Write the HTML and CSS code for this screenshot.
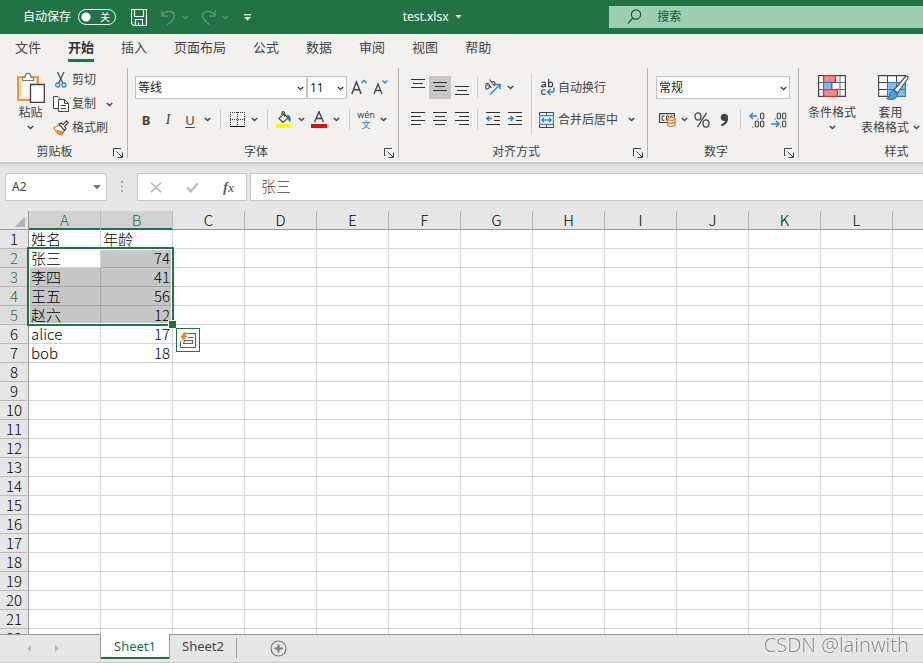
FILE: index.html
```html
<!DOCTYPE html>
<html lang="zh-CN">
<head>
<meta charset="utf-8">
<title>test.xlsx</title>
<link rel="stylesheet" href="styles.css">
</head>
<body>
<svg class="symbols" aria-hidden="true">
  <symbol id="chevron" viewBox="0 0 7 5"><path d="M.8 .9 3.5 3.5 6.2 .9" fill="none" stroke="currentColor" stroke-width="1.4"/></symbol>
  <symbol id="launcher" viewBox="0 0 10 10"><path d="M.5 8V.5H8M3.5 3.5 9 9M9.500 4.500V9.500H4.500" fill="none" stroke="currentColor"/></symbol>
</svg>

<header class="titlebar">
  <div class="quick">
    <label for="autosave">自动保存</label>
    <span class="switch"><input type="checkbox" role="switch" id="autosave"><span class="switch-text" aria-hidden="true">关</span></span>
    <button class="quick-btn save" aria-label="保存"><svg width="16" height="17" viewBox="0 0 16 17" fill="none" stroke="currentColor"><path d="M.5 .5H15.500V16.500H2.500L.5 14.500ZM3.500 .5V7.500H12.500V.5M4.500 16.500V10.500H11.500V16.500M7.500 16V13.500" stroke-width="1.2"/></svg></button>
    <button class="quick-btn faded" aria-label="撤消"><svg width="15" height="17" viewBox="0 0 15 17" fill="none" stroke="currentColor" stroke-width="1.4"><path d="M1 1V7H7M1 7C4 1 13 1 13.500 7C13.500 11 9 13 6 16"/></svg></button>
    <button class="quick-btn faded" aria-label="撤消选项"><svg width="7" height="5"><use href="#chevron"/></svg></button>
    <button class="quick-btn faded" aria-label="恢复"><svg width="15" height="17" viewBox="0 0 15 17" fill="none" stroke="currentColor" stroke-width="1.4"><path d="M14 1V7H8M14 7C11 1 2 1 1.500 7C1.500 11 6 13 9 16"/></svg></button>
    <button class="quick-btn faded" aria-label="恢复选项"><svg width="7" height="5"><use href="#chevron"/></svg></button>
    <button class="quick-btn custom" aria-label="自定义快速访问工具栏"><svg width="9" height="7" viewBox="0 0 9 7"><path d="M1 .7H8" stroke="currentColor" stroke-width="1.300"/><path d="M1 3 4.500 6.500 8 3Z" fill="currentColor"/></svg></button>
  </div>
  <button class="doc-title">test.xlsx <svg width="7" height="4" viewBox="0 0 7 4"><path d="M.5 0H6.500L3.500 3.500Z" fill="currentColor"/></svg></button>
  <div class="search">
    <svg width="15" height="16" viewBox="0 0 15 16" fill="none" stroke="currentColor" stroke-width="1.2"><circle cx="9" cy="5.500" r="4.600"/><path d="M5.800 9 .8 14.700"/></svg>
    <input type="search" aria-label="搜索" placeholder="搜索">
  </div>
</header>

<nav class="tabs" aria-label="功能区选项卡">
  <button>文件</button><button class="active">开始</button><button>插入</button><button>页面布局</button><button>公式</button><button>数据</button><button>审阅</button><button>视图</button><button>帮助</button>
</nav>

<section class="ribbon" aria-label="开始">
  <section class="group clipboard">
    <div class="group-body">
      <button class="big paste">
        <svg width="28" height="31" viewBox="0 0 28 31"><path d="M1 5H21V28H1Z" fill="#fcdf9c" stroke="#e8832a" stroke-width="1.6"/><path d="M4 7H19V26H4Z" fill="#faf8f5"/><path d="M5.500 8.500V5.500H8C8 0 14 0 14 5.500H16.500V8.500Z" fill="#fff" stroke="#777" stroke-width="1.2"/><path d="M13.500 12.500H27.300V30.300H13.500Z" fill="#fff" stroke="#3d3d3d" stroke-width="1.300"/></svg>
        <span>粘贴</span><svg class="drop" width="7" height="5"><use href="#chevron"/></svg>
      </button>
      <div class="small-list">
        <button><svg width="16" height="16" viewBox="0 0 16 16" fill="none"><path d="M4.500 0 9.800 11M11 0 5.700 11" stroke="#484848" stroke-width="1.200"/><circle cx="4.700" cy="13" r="2" stroke="#2b88d0" stroke-width="1.300"/><circle cx="11" cy="13" r="2" stroke="#2b88d0" stroke-width="1.300"/></svg><span>剪切</span></button>
        <button><svg width="16" height="16" viewBox="0 0 16 16" fill="#fff" stroke="#444"><path d="M5.500 12.500H.5V.5H5L7.500 3"/><path d="M5.500 3.500H11.500L15.500 7.500V15.500H5.500ZM11.500 3.500V7.500H15.500M7.500 9.500H13M7.500 12.500H13"/></svg><span>复制</span><svg class="drop" width="7" height="5"><use href="#chevron"/></svg></button>
        <button><svg width="16" height="16" viewBox="0 0 16 16"><path d="M7 4.500 1 7.500C2 11 5 14.500 8.500 15L11.500 10Z" fill="#fff" stroke="#e8751a" stroke-width="1.200"/><path d="M3 9.500 10 11.500 8.500 14.800C6 14 4 12 3 9.500Z" fill="#ee8424"/><path d="M6 4 8 3 10 4.500 13.500 .8 15.200 2.500 11.500 6.500 13 8.500 11.500 10.500Z" fill="#fff" stroke="#444" stroke-width="1.200"/></svg><span>格式刷</span></button>
      </div>
    </div>
    <footer><span>剪贴板</span><button class="launch" aria-label="剪贴板设置"><svg width="10" height="10"><use href="#launcher"/></svg></button></footer>
  </section>

  <section class="group font">
    <div class="group-body rows">
      <div class="row">
        <div class="combo face"><select aria-label="字体"><option>等线</option></select><svg width="7" height="5"><use href="#chevron"/></svg></div>
        <div class="combo size"><select aria-label="字号"><option>11</option></select><svg width="7" height="5"><use href="#chevron"/></svg></div>
        <button class="tool grow" aria-label="增大字号"><svg width="16" height="17" viewBox="0 0 16 17" fill="none"><path d="M.8 15 5.500 3 10.200 15M2.600 10.800H8.500" stroke="#444" stroke-width="1.400"/><path d="M10.500 4 13 1.500 15.500 4" stroke="#2b88d0" stroke-width="1.400"/></svg></button>
        <button class="tool" aria-label="减小字号"><svg width="16" height="17" viewBox="0 0 16 17" fill="none"><path d="M1 15 5 5 9 15M2.600 11.500H7.500" stroke="#444" stroke-width="1.300"/><path d="M9.500 1.500 12 4 14.500 1.500" stroke="#2b88d0" stroke-width="1.400"/></svg></button>
      </div>
      <div class="row">
        <button class="tool bold" aria-label="加粗">B</button>
        <button class="tool italic" aria-label="倾斜">I</button>
        <button class="tool underline" aria-label="下划线">U</button>
        <button class="arrow" aria-label="下划线选项"><svg width="7" height="5"><use href="#chevron"/></svg></button>
        <span class="sep"></span>
        <button class="tool" aria-label="边框"><svg width="15" height="15" viewBox="0 0 15 15" fill="none" stroke="#333" shape-rendering="crispEdges"><path d="M0 .5H15M0 7.500H15M.5 0V14M7.500 0V14M14.500 0V14" stroke-dasharray="1 1"/><path d="M0 14.500H15" stroke="#000"/></svg></button>
        <button class="arrow" aria-label="边框选项"><svg width="7" height="5"><use href="#chevron"/></svg></button>
        <span class="sep"></span>
        <button class="tool" aria-label="填充颜色"><svg width="16" height="17" viewBox="0 0 16 17"><path d="M3 7.500 8 2.500 12 7 7 11.500ZM6 5V1.800C6 .2 8.500 .2 8.500 1.800V6" fill="#fff" stroke="#444" stroke-width="1.200"/><path d="M11 4C14 4 15 6 14.500 10.500H13L11.500 7Z" fill="#2473b8"/><path d="M0 13H16V17H0Z" fill="#ff0"/></svg></button>
        <button class="arrow" aria-label="填充颜色选项"><svg width="7" height="5"><use href="#chevron"/></svg></button>
        <button class="tool" aria-label="字体颜色"><svg width="16" height="17" viewBox="0 0 16 17"><path d="M3.600 11 8 .8 12.400 11M5.200 7.500H10.800" fill="none" stroke="#444" stroke-width="1.400"/><path d="M0 13H16V17H0Z" fill="red"/></svg></button>
        <button class="arrow" aria-label="字体颜色选项"><svg width="7" height="5"><use href="#chevron"/></svg></button>
        <span class="sep"></span>
        <button class="tool phonetic" aria-label="拼音"><span>wén</span><b>文</b></button>
        <button class="arrow" aria-label="拼音选项"><svg width="7" height="5"><use href="#chevron"/></svg></button>
      </div>
    </div>
    <footer><span>字体</span><button class="launch" aria-label="字体设置"><svg width="10" height="10"><use href="#launcher"/></svg></button></footer>
  </section>

  <section class="group align">
    <div class="group-body">
      <div class="rows">
        <div class="row">
          <button class="tool" aria-label="顶端对齐"><svg width="14" height="17" viewBox="0 0 14 17" stroke="#333"><path d="M0 .5H14M2 4.500H12M0 8.500H14"/></svg></button>
          <button class="tool pressed" aria-label="垂直居中" aria-pressed="true"><svg width="14" height="17" viewBox="0 0 14 17" stroke="#333"><path d="M0 3.500H14M2 7.500H12M0 11.500H14"/></svg></button>
          <button class="tool" aria-label="底端对齐"><svg width="14" height="17" viewBox="0 0 14 17" stroke="#333"><path d="M0 7.500H14M2 11.500H12M0 15.500H14"/></svg></button>
          <span class="sep"></span>
          <button class="tool" aria-label="方向"><svg width="18" height="17" viewBox="0 0 18 17" fill="none"><path d="M1.500 5.500C2.500 3.500 4 4 5 5.500L7.500 9M4 5.500C1.500 6.500 1 8.500 2.200 9.500C4 11 6 8.500 5 6M5.500 .5 10.500 7M7.500 3.500C9 1 12.500 3.500 10.500 6.500" stroke="#444" stroke-width="1.100"/><path d="M6 15.500 16 5.500M11.500 5.500H16V10" stroke="#2b88d0" stroke-width="1.500"/></svg></button>
          <button class="arrow" aria-label="方向选项"><svg width="7" height="5"><use href="#chevron"/></svg></button>
        </div>
        <div class="row">
          <button class="tool" aria-label="左对齐"><svg width="14" height="15" viewBox="0 0 14 15" stroke="#333"><path d="M0 .5H14M0 4.500H10M0 8.500H14M0 12.500H10"/></svg></button>
          <button class="tool" aria-label="居中"><svg width="14" height="15" viewBox="0 0 14 15" stroke="#333"><path d="M0 .5H14M2 4.500H12M0 8.500H14M2 12.500H12"/></svg></button>
          <button class="tool" aria-label="右对齐"><svg width="14" height="15" viewBox="0 0 14 15" stroke="#333"><path d="M0 .5H14M4 4.500H14M0 8.500H14M4 12.500H14"/></svg></button>
          <span class="sep"></span>
          <button class="tool" aria-label="减少缩进量"><svg width="14" height="15" viewBox="0 0 14 15" fill="none" stroke="#333"><path d="M0 .5H14M8 4.500H14M8 8.500H14M0 12.500H14"/><path d="M6 6.500H.8M3.300 4 .8 6.500 3.300 9" stroke="#2b88d0" stroke-width="1.500"/></svg></button>
          <button class="tool" aria-label="增加缩进量"><svg width="14" height="15" viewBox="0 0 14 15" fill="none" stroke="#333"><path d="M0 .5H14M8 4.500H14M8 8.500H14M0 12.500H14"/><path d="M0 6.500H5.200M2.700 4 5.200 6.500 2.700 9" stroke="#2b88d0" stroke-width="1.500"/></svg></button>
        </div>
      </div>
      <span class="sep tall"></span>
      <div class="rows wide">
        <button class="row labelled"><svg width="16" height="17" viewBox="0 0 16 17" fill="none" stroke="#444" stroke-width="1.200"><path d="M2.500 3.500C5 2.500 6.500 3 6.500 4.500V8.200M6.500 5.500C4 5.500 2.600 6 2.600 7C2.600 8.500 5.500 8.200 6.500 6.500M9.600 0V8M9.600 5.500C9.600 2.300 13.600 2.300 13.600 5.500C13.600 8.500 9.600 8.500 9.600 5.500M6.500 11.200C4.500 10.200 2.600 11 2.600 13.200C2.600 15.300 4.500 16 6.500 15"/><path d="M15 8.500V11.500C15 12.500 14.500 13 13.500 13H8.500M11.500 10 8.500 13 11.500 16" stroke="#2b88d0" stroke-width="1.500"/></svg><span>自动换行</span></button>
        <button class="row labelled"><svg width="16" height="16" viewBox="0 0 16 16" fill="none"><path d="M.5 .5H14.500V15.500H.5ZM7.500 .5V4M7.500 12V15.500" stroke="#444"/><path d="M.6 3.600H14.400V12.400H.6Z" fill="#fff" stroke="#2b88d0" stroke-width="1.200"/><path d="M3 8H12M5 5.800 2.800 8 5 10.200M10 5.800 12.200 8 10 10.200" stroke="#2b88d0" stroke-width="1.300"/></svg><span>合并后居中</span><svg class="drop" width="7" height="5"><use href="#chevron"/></svg></button>
      </div>
    </div>
    <footer><span>对齐方式</span><button class="launch" aria-label="对齐设置"><svg width="10" height="10"><use href="#launcher"/></svg></button></footer>
  </section>

  <section class="group number">
    <div class="group-body rows">
      <div class="row">
        <div class="combo format"><select aria-label="数字格式"><option>常规</option></select><svg width="7" height="5"><use href="#chevron"/></svg></div>
      </div>
      <div class="row">
        <button class="tool" aria-label="会计数字格式"><svg width="17" height="14" viewBox="0 0 17 14" fill="none"><path d="M8 9.500H.6V.6H15.400V4" stroke="#444" stroke-width="1.200"/><path d="M5.500 3H3.200V7.300H5.500M7.400 7.500V3H9.500V7M11.500 4V3H13.500" stroke="#444"/><path d="M8.600 6V12C8.600 13.800 16 13.800 16 12V6" fill="#fff" stroke="#e8751a" stroke-width="1.200"/><ellipse cx="12.300" cy="5.800" rx="3.700" ry="1.500" fill="#fff" stroke="#e8751a" stroke-width="1.200"/><path d="M8.600 9C9 10.500 15.500 10.500 16 9" stroke="#e8751a" stroke-width="1.300"/></svg></button>
        <button class="arrow" aria-label="会计格式选项"><svg width="7" height="5"><use href="#chevron"/></svg></button>
        <button class="tool" aria-label="百分比样式"><svg width="16" height="16" viewBox="0 0 16 16" fill="none" stroke="#444" stroke-width="1.300"><ellipse cx="4" cy="4.500" rx="3" ry="3.600"/><ellipse cx="12" cy="11.500" rx="3" ry="3.600"/><path d="M12.500 .8 3.500 15.200"/></svg></button>
        <button class="tool" aria-label="千位分隔样式"><svg width="9" height="14" viewBox="0 0 9 14"><circle cx="4.300" cy="4.300" r="3.600" fill="#444"/><path d="M6.500 3C8 7 5.500 10.500 1.500 12.500" fill="none" stroke="#444" stroke-width="2.200"/></svg></button>
        <span class="sep"></span>
        <button class="tool" aria-label="增加小数位数"><svg width="16" height="16" viewBox="0 0 16 16" fill="none" stroke="#444" stroke-width="1.100"><path d="M9 6.500V7.500M4 14.500V15.500"/><rect x="11.500" y="1" width="3.300" height="6" rx="1.600"/><rect x="6.200" y="9" width="3.300" height="6" rx="1.600"/><rect x="11.500" y="9" width="3.300" height="6" rx="1.600"/><path d="M8 4H1M4 1 1 4 4 7" stroke="#2b88d0" stroke-width="1.500"/></svg></button>
        <button class="tool" aria-label="减少小数位数"><svg width="16" height="16" viewBox="0 0 16 16" fill="none" stroke="#444" stroke-width="1.100"><path d="M4 6.500V7.500M9.500 14.500V15.500"/><rect x="6.200" y="1" width="3.300" height="6" rx="1.600"/><rect x="11.500" y="1" width="3.300" height="6" rx="1.600"/><rect x="11.500" y="9" width="3.300" height="6" rx="1.600"/><path d="M0 12H8M5 9 8 12 5 15" stroke="#2b88d0" stroke-width="1.500"/></svg></button>
      </div>
    </div>
    <footer><span>数字</span><button class="launch" aria-label="数字设置"><svg width="10" height="10"><use href="#launcher"/></svg></button></footer>
  </section>

  <section class="group styles">
    <div class="group-body">
      <button class="big">
        <svg width="30" height="28" viewBox="0 0 30 28"><path d="M1.600 3.600H28.400V24.400H1.600Z" fill="#fff" stroke="#444" stroke-width="1.200"/><path d="M6.500 4V24M15 4V24M23 4V24M2 10.500H28M2 17.500H28" stroke="#666"/><path d="M6.600 3.600H18.400V10.400H6.600ZM6.600 17.600H20.400V24.400H6.600Z" fill="#ff8b90" stroke="#e02a20" stroke-width="1.300"/><path d="M6.600 10.500H14.400V17.500H6.600Z" fill="#7fbbea" stroke="#2b7cc4"/></svg>
        <span>条件格式</span><svg class="drop" width="7" height="5"><use href="#chevron"/></svg>
      </button>
      <button class="big">
        <svg width="32" height="28" viewBox="0 0 32 28"><path d="M1.600 3.600H28.400V24.400H1.600Z" fill="#fff" stroke="#444" stroke-width="1.200"/><path d="M10.500 10.500H28.400V24.400H10.500Z" fill="#83bdec"/><path d="M10.500 4V10M19.500 4V10M2 10.500H28M2 17.500H10.500" stroke="#444"/><path d="M10.500 10.500V24.400M19.500 10.500V24.400M10.500 17.500H28.400M10.500 10.500H28.400V24.400H12" stroke="#2b7cc4" fill="none"/><path d="M17 18 28.500 4.500C30 3 32 4.500 30.500 7L20.500 21Z" fill="#fff" stroke="#555" stroke-width="1.200"/><path d="M16.500 18.500C13 18.500 13 22 12.500 24C12 26 10 26 9.500 26.500C14 28.500 20 27.500 20.500 22.500Z" fill="#4b9de0" stroke="#1f6cb4"/></svg>
        <span>套用</span><span class="with-drop">表格格式<svg width="7" height="5"><use href="#chevron"/></svg></span>
      </button>
    </div>
    <footer><span>样式</span></footer>
  </section>
</section>

<section class="formula-bar" aria-label="编辑栏">
  <div class="name-box"><input aria-label="名称框" value="A2"><button aria-label="名称列表"><svg width="8" height="5" viewBox="0 0 8 5"><path d="M0 0H8L4 4.600Z" fill="#777"/></svg></button></div>
  <svg class="dots" width="2" height="12" viewBox="0 0 2 12" fill="#aaa"><path d="M0 0H2V2H0ZM0 4.500H2V6.500H0ZM0 9H2V11H0Z"/></svg>
  <div class="edit-actions">
    <button aria-label="取消"><svg width="12" height="11" viewBox="0 0 12 11"><path d="M1 .8 11 10.200M11 .8 1 10.200" stroke="#bdbdbd" stroke-width="1.800"/></svg></button>
    <button aria-label="输入"><svg width="13" height="11" viewBox="0 0 13 11"><path d="M1 5.500 4.700 9.200 12 1.200" fill="none" stroke="#bdbdbd" stroke-width="2.400"/></svg></button>
    <button class="fx" aria-label="插入函数">f<sub>x</sub></button>
  </div>
  <input class="formula" aria-label="公式" value="张三">
</section>

<main class="grid">
  <table>
    <thead><tr id="columns"></tr></thead>
    <tbody id="rows"></tbody>
  </table>
  <div class="selection"></div>
  <button class="quick-analysis" aria-label="快速分析"><svg width="18" height="17" viewBox="0 0 18 17" fill="none" stroke="#666"><path d="M8 1.500H16.500V15.500H1.500V9.500M9 5.500H14.500M5.500 8.500H13.500V11.500H4.500Z" stroke-width="1.200"/><path d="M4.500 .5H8.500L6.500 4H8.500L2 10 3.700 6H1.500Z" fill="#ee8424" stroke="none"/></svg></button>
</main>

<footer class="sheet-bar">
  <div class="sheet-nav">
    <button aria-label="上一个工作表"><svg width="4" height="7" viewBox="0 0 4 7"><path d="M4 0V7L0 3.500Z" fill="#bbb"/></svg></button>
    <button aria-label="下一个工作表"><svg width="4" height="7" viewBox="0 0 4 7"><path d="M0 0V7L4 3.500Z" fill="#bbb"/></svg></button>
  </div>
  <button class="sheet active">Sheet1</button>
  <button class="sheet">Sheet2</button>
  <span class="sheet-divider"></span>
  <button class="add" aria-label="新工作表"><svg width="17" height="17" viewBox="0 0 17 17" fill="none" stroke="#777"><circle cx="8.500" cy="8.500" r="7.500" stroke-width="1.200"/><path d="M8.500 4.500V12.500M4.500 8.500H12.500" stroke-width="2"/></svg></button>
</footer>
<div class="watermark">CSDN @lainwith</div>
<script src="script.js"></script>
</body>
</html>
```

FILE: styles.css
```css
* { box-sizing: border-box; }

:root {
  --green: #217346;
  --ui: "Noto Sans", "Noto Sans CJK SC", sans-serif;
  --cell: "Noto Sans CJK SC", sans-serif;
}

body {
  margin: 0;
  height: 100vh;
  display: flex;
  flex-direction: column;
  overflow: hidden;
  background: #e6e6e6;
  color: #444;
  font: 12px/16px var(--ui);
}

button, input, select { font: inherit; color: inherit; }
button { padding: 0; border: 0; background: none; }
svg { display: block; flex: none; }
.symbols { position: absolute; width: 0; height: 0; }

/* Title bar */
.titlebar {
  flex: none;
  display: flex;
  align-items: center;
  height: 34px;
  background: var(--green);
  color: #fff;
}
.quick { display: flex; align-items: center; width: 255px; padding-left: 23px; }
.switch { position: relative; display: flex; margin: 0 15px 0 7px; }
.switch input {
  appearance: none;
  width: 38px;
  height: 16px;
  margin: 0;
  border: 1px solid #fff;
  border-radius: 8px;
  background: radial-gradient(circle at 7px 7px, #fff 4px, transparent 5px);
}
.switch-text { position: absolute; right: 6px; top: 0; font-size: 10px; pointer-events: none; }
.quick-btn { display: flex; align-items: center; }
.quick-btn + .quick-btn { margin-left: 6px; }
.quick-btn.save + .quick-btn { margin-left: 14px; }
.faded { color: #589674; }
.faded:nth-of-type(4) { margin-left: 12px; }
.quick-btn.custom { margin-left: 14px; }
.doc-title { flex: 1; display: flex; align-items: center; justify-content: center; gap: 6px; }
.search {
  flex: 0 0 34%;
  display: flex;
  align-items: center;
  gap: 15px;
  height: 22px;
  padding-left: 18px;
  background: #9fcdb3;
  color: #0e5c2f;
}
.search svg { margin-right: 0; }
.search input { flex: 1; min-width: 0; padding: 0; border: 0; background: none; }
.search input::placeholder { color: inherit; opacity: 1; }

/* Ribbon tabs */
.tabs { flex: none; display: flex; gap: 27px; height: 30px; padding-left: 15px; background: #f3f1f0; }
.tabs button { height: 28px; border-bottom: 3px solid transparent; font-size: 13px; }
.tabs .active { border-color: var(--green); color: #333; font-weight: 700; }

/* Ribbon */
.ribbon {
  flex: none;
  display: flex;
  height: 100px;
  padding: 4px 0;
  overflow: hidden;
  background: #f3f1f0;
  border-bottom: 2px solid #cecccb;
}
.group { flex: none; display: flex; flex-direction: column; justify-content: space-between; border-right: 1px solid #b5b3b2; }
.group footer { display: flex; height: 14px; line-height: 16px; padding-right: 2px; }
.group footer span { flex: 1; text-align: center; }
.launch { display: flex; align-items: flex-end; width: 12px; }
.group-body { display: flex; }
.rows { display: flex; flex-direction: column; gap: 9px; padding-top: 8px; }
.row { display: flex; align-items: center; height: 23px; }
.clipboard { width: 128px; }
.clipboard footer span { padding-right: 4px; }
.font { width: 271px; }
.align { width: 249px; }
.number { width: 151px; }
.styles { width: 198px; }
.font .rows { padding-left: 7px; }
.number .rows, .align .rows { padding-left: 8px; }

.big { display: flex; flex-direction: column; align-items: center; line-height: 15px; padding-top: 4px; }
.big .drop { margin-top: 5px; }
.big > svg:first-child { margin-bottom: 2px; }
.paste { width: 53px; padding-left: 8px; }
.big span { white-space: nowrap; }
.small-list { display: flex; flex-direction: column; }
.small-list button { display: flex; align-items: center; gap: 3px; height: 24px; }
.small-list .drop { margin-left: 7px; }
.styles .group-body { padding-left: 9px; gap: 5px; }
.styles .big > svg:first-child { margin-bottom: 5px; }
.with-drop { display: flex; align-items: center; gap: 4px; }
.styles .big:last-child > svg { margin-left: 4px; }

.number .rows, .styles .group-body { flex: none; }

.combo { position: relative; height: 23px; }
.combo select {
  appearance: none;
  width: 100%;
  height: 100%;
  padding: 0 16px 0 2px;
  border: 1px solid #c6c4c2;
  border-radius: 0;
  background: #fff;
  color: #222;
}
.combo svg { position: absolute; right: 3px; top: 10px; pointer-events: none; }
.face { width: 172px; }
.size { width: 40px; }
.format { width: 134px; }
.grow { margin-left: 1px; }

.tool { flex: none; display: flex; align-items: center; justify-content: center; width: 22px; height: 23px; }
.arrow { flex: none; display: flex; justify-content: center; width: 13px; }
.sep { flex: none; width: 1px; height: 21px; margin: 0 5px; background: #d0cecc; }
.font .sep { margin-left: 6px; }
.align .sep { margin: 0 4px; }
.align .sep.tall { height: 60px; margin: 6px 0 0 5px; }
.pressed { background: #c8c6c4; }
.bold { font-weight: 700; font-size: 13px; }
.italic { font: italic 14px "Liberation Serif", serif; }
.underline { font-size: 13px; text-decoration: underline; text-underline-offset: 2px; }
.phonetic { flex-direction: column; font-size: 9px; line-height: 10px; }
.phonetic b { color: #2b88d0; font-weight: 400; }
.align .wide { padding-left: 7px; }
.labelled { gap: 3px; }
.labelled .drop { margin-left: 7px; }

/* Formula bar */
.formula-bar { flex: none; display: flex; align-items: center; padding: 9px 0 10px 5px; background: linear-gradient(#dcdcdc, #e6e6e6 6px); }
.name-box, .edit-actions, .formula { height: 28px; border: 1px solid #c6c6c6; background: #fff; }
.name-box { display: flex; align-items: center; width: 102px; padding: 0 5px 0 6px; }
.name-box input { flex: 1; min-width: 0; padding: 0; border: 0; }
.dots { margin: 0 14px; }
.edit-actions { display: flex; align-items: center; justify-content: space-around; width: 110px; margin-right: 3px; }
.fx { font: italic 700 15px/16px "Liberation Serif", serif; color: #666; }
.fx sub { font-size: 12px; vertical-align: baseline; }
.formula { flex: 1; min-width: 0; padding: 0 10px 4px; border-right: 0; font: 300 15px var(--cell); }

/* Worksheet */
.grid { position: relative; flex: 1; min-height: 0; overflow: hidden; background: #fff; }
.grid table { width: max-content; table-layout: fixed; border-spacing: 0; font: 300 15px/18px var(--cell); color: #000; }
.grid th, .grid td { height: 19px; padding: 0; border: solid #d4d4d4; border-width: 0 1px 1px 0; }
.grid td { width: 72px; max-width: 72px; padding: 0 2px; white-space: nowrap; }
.grid th { width: 72px; background: #e6e6e6; font-weight: 300; border-color: #b8b8b8; }
.grid thead th { border-bottom-color: #999; }
.grid th:first-child { width: 29px; border-right-color: #999; }
.grid thead th.on { background: #d2d2d2; color: var(--green); border-bottom-color: var(--green); box-shadow: inset 0 -1px var(--green); }
.grid tbody th.on { background: #dcdcdc; color: var(--green); }
.grid td.number { text-align: right; }
.grid td.picked { background: #c6c6c6; border-color: #a6a6a6; }
.grid .corner { background: linear-gradient(135deg, transparent 50%, #b4b4b4 50%) 14px 5px / 11px 11px no-repeat #e6e6e6; }
.selection {
  position: absolute;
  left: 27px;
  top: 36px;
  width: 147px;
  height: 79px;
  border: 2px solid var(--green);
  box-shadow: inset 0 0 0 1px #fff;
  pointer-events: none;
}
.selection::after {
  content: "";
  position: absolute;
  right: -4px;
  bottom: -4px;
  width: 7px;
  height: 7px;
  border: solid #fff;
  border-width: 1px 0 0 1px;
  background: var(--green);
}
.quick-analysis {
  position: absolute;
  left: 176px;
  top: 117px;
  display: flex;
  align-items: center;
  justify-content: center;
  width: 24px;
  height: 24px;
  border: 1px solid var(--green);
  background: #fff;
}

/* Sheet tabs */
.sheet-bar { flex: none; display: flex; height: 29px; border-bottom: 1px solid #c8c8c8; font-size: 13px; background: linear-gradient(#999 1px, #e6e6e6 1px); }
.sheet-nav { display: flex; align-items: center; gap: 24px; width: 100px; padding-left: 27px; }
.sheet { height: 25px; padding: 0 12px 2px; }
.sheet.active { width: 70px; border: solid #999; border-width: 0 1px; background: linear-gradient(#fff 23px, var(--green) 23px); color: var(--green); }
.sheet-divider { width: 1px; height: 20px; margin-top: 4px; background: #999; }
.add { margin-left: 33px; }

.watermark { position: fixed; right: 14px; bottom: 6px; font-size: 20px; line-height: 24px; font-weight: 300; color: #8c8c8c; text-shadow: 0 0 2px #fff; pointer-events: none; }
```

FILE: script.js
```js
const columns = "ABCDEFGHIJKL".split("").concat("");
const data = [
  ["姓名", "年龄"],
  ["张三", 74],
  ["李四", 41],
  ["王五", 56],
  ["赵六", 12],
  ["alice", 17],
  ["bob", 18],
];
const rowCount = 22;
const selected = (row) => row >= 2 && row <= 5;

document.getElementById("columns").innerHTML =
  '<th class="corner"></th>' +
  columns.map((c, i) => `<th scope="col"${i < 2 ? ' class="on"' : ""}>${c}</th>`).join("");

let html = "";
for (let row = 1; row <= rowCount; row++) {
  html += `<tr><th scope="row"${selected(row) ? ' class="on"' : ""}>${row}</th>`;
  columns.forEach((_, i) => {
    const value = data[row - 1]?.[i] ?? "";
    const classes = [];
    if (typeof value === "number") classes.push("number");
    if (selected(row) && i < 2 && !(row === 2 && i === 0)) classes.push("picked");
    html += `<td class="${classes.join(" ")}">${value}</td>`;
  });
  html += "</tr>";
}
document.getElementById("rows").innerHTML = html;
```
